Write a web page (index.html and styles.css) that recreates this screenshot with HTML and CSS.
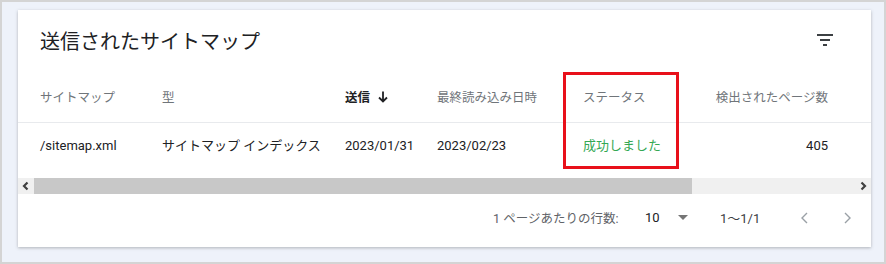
FILE: index.html
```html
<!DOCTYPE html>
<html lang="ja">
<head>
    <meta charset="UTF-8">
    <title>送信されたサイトマップ</title>
    <link rel="stylesheet" href="styles.css">
</head>
<body>
    <div class="frame">
        <div class="card">
            <div class="card-head">
                <h1>送信されたサイトマップ</h1>
                <svg class="filter-icon" width="16" height="12" viewBox="0 0 16 12">
                    <rect x="0" y="0" width="16" height="2" fill="#3c4043"/>
                    <rect x="3" y="5" width="10" height="2" fill="#3c4043"/>
                    <rect x="6" y="10" width="4" height="2" fill="#3c4043"/>
                </svg>
            </div>

            <table class="sitemaps">
                <thead>
                    <tr>
                        <th class="col-path">サイトマップ</th>
                        <th class="col-type">型</th>
                        <th class="col-sent sorted">送信
                            <svg class="arrow" width="10" height="12" viewBox="0 0 10 12">
                                <path d="M5 0.5 V10.5 M1 6.5 L5 10.5 L9 6.5" fill="none" stroke="#202124" stroke-width="1.8"/>
                            </svg>
                        </th>
                        <th class="col-read">最終読み込み日時</th>
                        <th class="col-status">ステータス</th>
                        <th class="col-pages">検出されたページ数</th>
                    </tr>
                </thead>
                <tbody>
                    <tr>
                        <td class="col-path">/sitemap.xml</td>
                        <td class="col-type">サイトマップ インデックス</td>
                        <td class="col-sent">2023/01/31</td>
                        <td class="col-read">2023/02/23</td>
                        <td class="col-status ok">成功しました</td>
                        <td class="col-pages">405</td>
                    </tr>
                </tbody>
            </table>

            <div class="hscroll">
                <span class="scroll-btn">
                    <svg width="16" height="16" viewBox="0 0 16 16"><path d="M9.5 4.5 L6 8 L9.5 11.5" fill="none" stroke="#404040" stroke-width="2.2"/></svg>
                </span>
                <div class="scroll-track"><div class="scroll-thumb"></div></div>
                <span class="scroll-btn">
                    <svg width="16" height="16" viewBox="0 0 16 16"><path d="M6.5 4.5 L10 8 L6.5 11.5" fill="none" stroke="#404040" stroke-width="2.2"/></svg>
                </span>
            </div>

            <div class="pager">
                <span class="rows-label">1 ページあたりの行数:</span>
                <span class="rows-value">10</span>
                <span class="rows-caret"></span>
                <span class="range">1〜1/1</span>
                <span class="nav">
                    <svg width="10" height="14" viewBox="0 0 10 14"><path d="M7 2 L2 7 L7 12" fill="none" stroke="#9aa0a6" stroke-width="1.4"/></svg>
                </span>
                <span class="nav">
                    <svg width="10" height="14" viewBox="0 0 10 14"><path d="M3 2 L8 7 L3 12" fill="none" stroke="#9aa0a6" stroke-width="1.4"/></svg>
                </span>
            </div>

            <div class="highlight"></div>
        </div>
    </div>
</body>
</html>
```

FILE: styles.css
```css
body {
    margin: 0;
    font-family: Roboto, "Noto Sans CJK JP", sans-serif;
    color: #202124;
}

.frame {
    width: 886px;
    height: 264px;
    box-sizing: border-box;
    padding: 8px 0 0 16px;
    border: 2px solid #d4d4d4;
    background: #eef2fa;
}

.card {
    position: relative;
    width: 853px;
    height: 237px;
    background: #fff;
    box-shadow: 0 1px 3px rgba(60, 64, 67, 0.35);
    overflow: hidden;
}

.card-head {
    display: flex;
    align-items: center;
    justify-content: space-between;
    height: 60px;
    padding: 0 38px 0 22px;
}

.card-head h1 {
    margin: 0;
    font-size: 20px;
    font-weight: 400;
    color: #202124;
}

.sitemaps {
    border-collapse: collapse;
    table-layout: fixed;
    width: 853px;
}

.sitemaps th {
    height: 52px;
    padding: 0;
    font-size: 12.5px;
    font-weight: 400;
    color: #70757a;
    text-align: left;
    border-bottom: 1px solid #e8eaed;
    white-space: nowrap;
}

.sitemaps th.sorted {
    font-weight: 700;
    color: #202124;
}

.arrow {
    margin-left: 5px;
    vertical-align: -1px;
}

.sitemaps td {
    height: 55px;
    padding: 13px 0 0 0;
    box-sizing: border-box;
    vertical-align: top;
    font-size: 13px;
    line-height: 20px;
    white-space: nowrap;
}

.col-path { width: 122px; padding-left: 22px !important; }
.col-type { width: 183px; }
.col-sent { width: 92px; }
.col-read { width: 146px; }
.col-status { width: 117px; }
.col-pages { text-align: right !important; padding-right: 43px !important; }

.ok {
    color: #34a853;
}

.hscroll {
    display: flex;
    height: 16px;
    background: #f0f0f0;
}

.scroll-btn {
    width: 16px;
    height: 16px;
}

.scroll-track {
    flex: 1;
}

.scroll-thumb {
    width: 658px;
    height: 16px;
    background: #c8c8c8;
}

.pager {
    display: flex;
    align-items: center;
    height: 48px;
    padding-left: 475px;
    font-size: 12.5px;
    color: #5f6368;
}

.pager > span {
    flex: none;
}

.rows-label {
    width: 152px;
}

.rows-value {
    width: 33px;
    font-size: 13px;
    color: #202124;
}

.rows-caret {
    width: 0;
    height: 0;
    border-left: 5px solid transparent;
    border-right: 5px solid transparent;
    border-top: 5px solid #757575;
    margin-right: 32px;
}

.range {
    width: 80px;
    font-size: 13px;
    color: #3c4043;
}

.nav {
    width: 42px;
    height: 14px;
}

.nav:last-child {
    width: 29px;
}

.highlight {
    position: absolute;
    left: 545px;
    top: 62px;
    width: 110px;
    height: 91px;
    border: 3px solid #e8101a;
}
```
